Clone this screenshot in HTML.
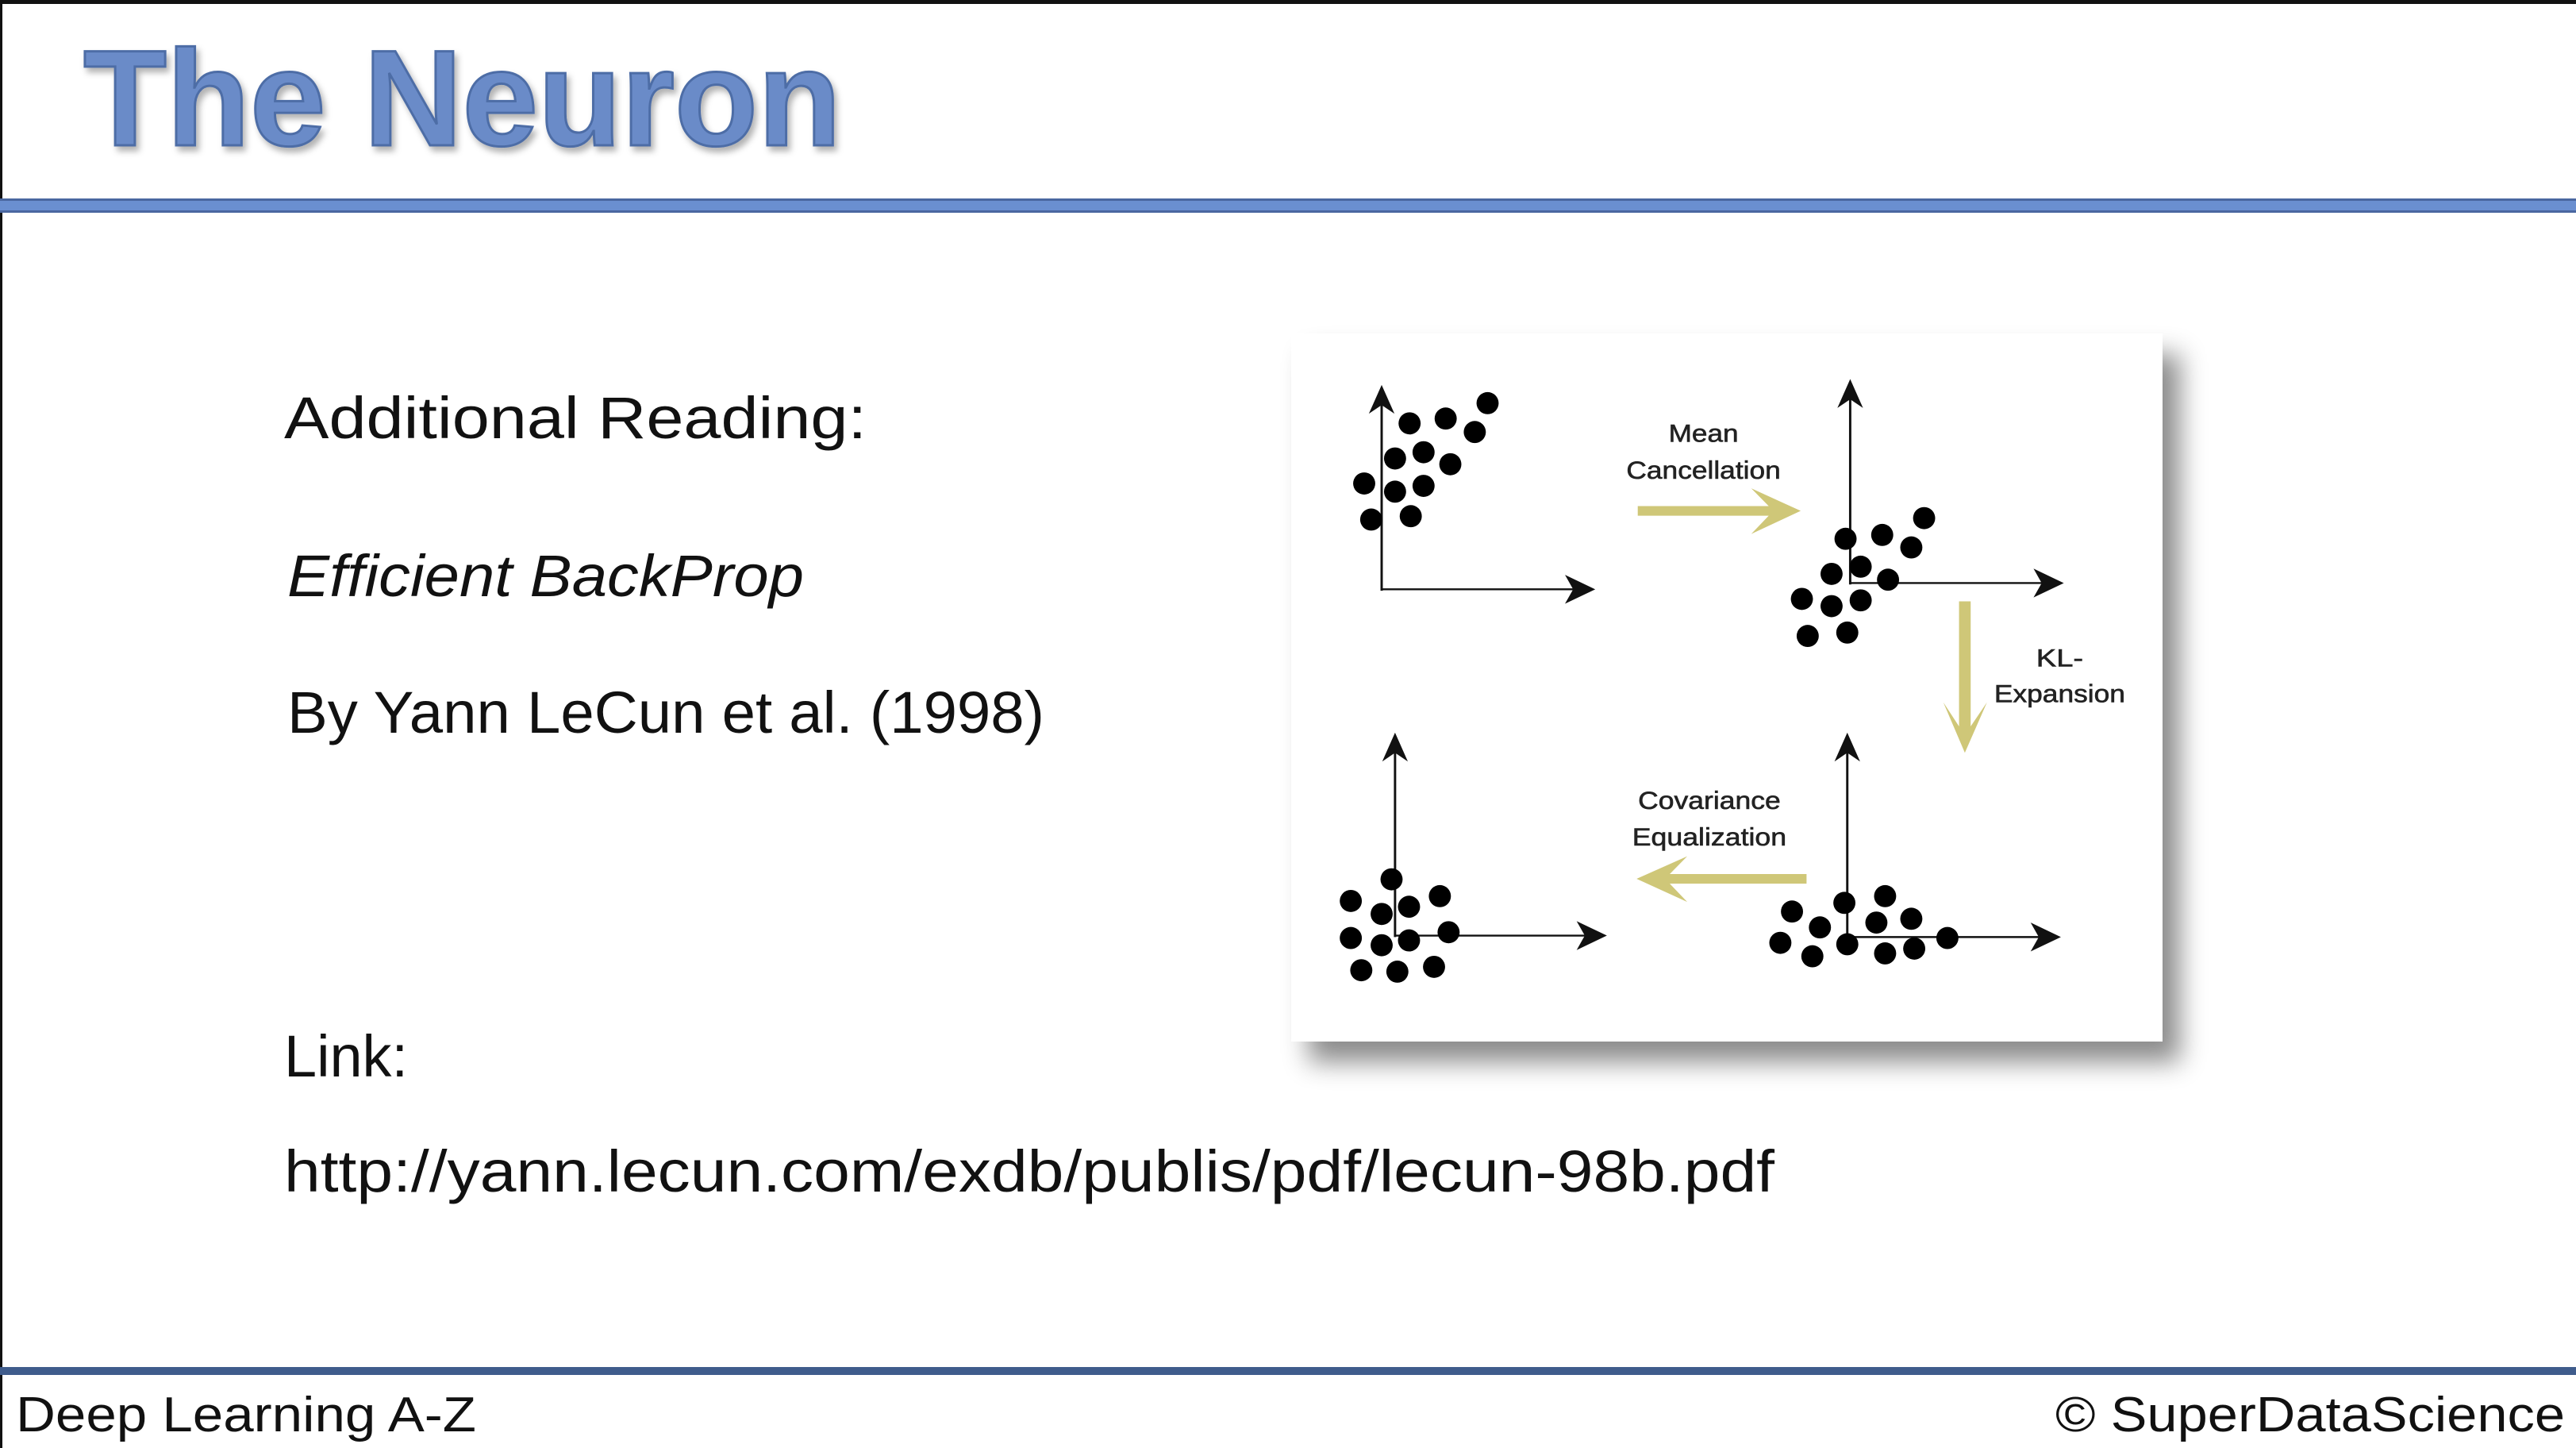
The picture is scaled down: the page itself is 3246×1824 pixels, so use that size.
<!DOCTYPE html>
<html><head><meta charset="utf-8"><style>
html,body{margin:0;padding:0;background:#fff}
body{width:3246px;height:1824px;position:relative;overflow:hidden;font-family:"Liberation Sans",sans-serif}
</style></head><body>
<svg width="3246" height="1824" style="position:absolute;left:0;top:0" xmlns="http://www.w3.org/2000/svg">
<defs>
<filter id="ts" x="-5%" y="-5%" width="110%" height="120%"><feDropShadow dx="4" dy="6" stdDeviation="4" flood-color="#000" flood-opacity="0.3"/></filter>
<filter id="bs" x="-10%" y="-10%" width="125%" height="125%"><feDropShadow dx="22" dy="26" stdDeviation="16" flood-color="#000" flood-opacity="0.45"/></filter>
</defs>
<rect x="0" y="0" width="3246" height="5" fill="#111"/>
<rect x="0" y="0" width="3" height="1824" fill="#111"/>
<text x="105" y="183" font-size="172" font-weight="bold" fill="#6a8bc8" stroke="#4e6da6" stroke-width="3" filter="url(#ts)" textLength="955" lengthAdjust="spacingAndGlyphs">The Neuron</text>
<rect x="0" y="250" width="3246" height="18" fill="#6a8fd0"/>
<rect x="0" y="250" width="3246" height="3" fill="#4a67a0"/>
<rect x="0" y="265" width="3246" height="3" fill="#4a67a0"/>
<g font-size="74" fill="#111">
<text x="358" y="552" textLength="734" lengthAdjust="spacingAndGlyphs">Additional Reading:</text>
<text x="362" y="751" font-style="italic" textLength="651" lengthAdjust="spacingAndGlyphs">Efficient BackProp</text>
<text x="362" y="923" textLength="954" lengthAdjust="spacingAndGlyphs">By Yann LeCun et al. (1998)</text>
<text x="358" y="1356" textLength="156" lengthAdjust="spacingAndGlyphs">Link:</text>
<text x="358" y="1501" textLength="1878" lengthAdjust="spacingAndGlyphs">http://yann.lecun.com/exdb/publis/pdf/lecun-98b.pdf</text>
</g>
<rect x="1627" y="420" width="1098" height="892" fill="#fff" filter="url(#bs)"/>
<rect x="0" y="1722" width="3246" height="10" fill="#3f5c8c"/>
<text x="20" y="1803" font-size="62" fill="#111" textLength="580" lengthAdjust="spacingAndGlyphs">Deep Learning A-Z</text>
<text x="2590" y="1803" font-size="62" fill="#111" textLength="642" lengthAdjust="spacingAndGlyphs">© SuperDataScience</text>
</svg>
<svg width="1150" height="950" viewBox="0 0 1568 1568" preserveAspectRatio="none" style="position:absolute;left:1620px;top:400px" xmlns="http://www.w3.org/2000/svg">
<g stroke="#111" stroke-width="4" fill="none">
<path d="M165 568V150M165 565H500"/>
<path d="M970 555V140M970 552H1305"/>
<path d="M965 1290V875M965 1288H1300"/>
<path d="M188 1288V875M188 1285H520"/>
</g>
<g fill="#111">
<path d="M165 140l-22 60 22-18 22 18z"/><path d="M532 565l-52-30 14 30-14 30z"/>
<path d="M970 128l-22 60 22-18 22 18z"/><path d="M1337 552l-52-30 14 30-14 30z"/>
<path d="M965 863l-22 60 22-18 22 18z"/><path d="M1332 1288l-52-30 14 30-14 30z"/>
<path d="M188 863l-22 60 22-18 22 18z"/><path d="M552 1285l-52-30 14 30-14 30z"/>
</g>
<g fill="#000">
<ellipse cx="347" cy="178" rx="19" ry="23"/><ellipse cx="213" cy="220" rx="19" ry="23"/><ellipse cx="275" cy="210" rx="19" ry="23"/><ellipse cx="325" cy="238" rx="19" ry="23"/><ellipse cx="237" cy="280" rx="19" ry="23"/><ellipse cx="188" cy="293" rx="19" ry="23"/><ellipse cx="283" cy="305" rx="19" ry="23"/><ellipse cx="135" cy="345" rx="19" ry="23"/><ellipse cx="188" cy="362" rx="19" ry="23"/><ellipse cx="237" cy="350" rx="19" ry="23"/><ellipse cx="147" cy="420" rx="19" ry="23"/><ellipse cx="215" cy="413" rx="19" ry="23"/>
<ellipse cx="1097" cy="417" rx="19" ry="23"/><ellipse cx="962" cy="460" rx="19" ry="23"/><ellipse cx="1025" cy="452" rx="19" ry="23"/><ellipse cx="1075" cy="478" rx="19" ry="23"/><ellipse cx="988" cy="518" rx="19" ry="23"/><ellipse cx="938" cy="533" rx="19" ry="23"/><ellipse cx="1035" cy="545" rx="19" ry="23"/><ellipse cx="887" cy="585" rx="19" ry="23"/><ellipse cx="938" cy="600" rx="19" ry="23"/><ellipse cx="988" cy="588" rx="19" ry="23"/><ellipse cx="897" cy="662" rx="19" ry="23"/><ellipse cx="965" cy="655" rx="19" ry="23"/>
<ellipse cx="1030" cy="1203" rx="19" ry="23"/><ellipse cx="960" cy="1217" rx="19" ry="23"/><ellipse cx="870" cy="1235" rx="19" ry="23"/><ellipse cx="1075" cy="1250" rx="19" ry="23"/><ellipse cx="918" cy="1268" rx="19" ry="23"/><ellipse cx="1015" cy="1258" rx="19" ry="23"/><ellipse cx="850" cy="1300" rx="19" ry="23"/><ellipse cx="965" cy="1303" rx="19" ry="23"/><ellipse cx="1137" cy="1290" rx="19" ry="23"/><ellipse cx="1080" cy="1312" rx="19" ry="23"/><ellipse cx="905" cy="1328" rx="19" ry="23"/><ellipse cx="1030" cy="1322" rx="19" ry="23"/>
<ellipse cx="182" cy="1168" rx="19" ry="23"/><ellipse cx="112" cy="1213" rx="19" ry="23"/><ellipse cx="165" cy="1240" rx="19" ry="23"/><ellipse cx="212" cy="1225" rx="19" ry="23"/><ellipse cx="265" cy="1203" rx="19" ry="23"/><ellipse cx="112" cy="1290" rx="19" ry="23"/><ellipse cx="165" cy="1305" rx="19" ry="23"/><ellipse cx="212" cy="1295" rx="19" ry="23"/><ellipse cx="280" cy="1278" rx="19" ry="23"/><ellipse cx="130" cy="1357" rx="19" ry="23"/><ellipse cx="192" cy="1360" rx="19" ry="23"/><ellipse cx="255" cy="1350" rx="19" ry="23"/>
</g>
<g fill="#cfc778">
<path d="M605 392H830L800 355 885 402 800 450 830 412H605z"/>
<path d="M1157 590V850L1130 800 1167 905 1205 800 1177 850V590z"/>
<path d="M895 1157H660L690 1120 603 1167 690 1215 660 1177H895z"/>
</g>
<g font-size="52" fill="#222" stroke="#222" stroke-width="1" text-anchor="middle">
<text x="718" y="258" textLength="120" lengthAdjust="spacingAndGlyphs">Mean</text><text x="718" y="335" textLength="265" lengthAdjust="spacingAndGlyphs">Cancellation</text>
<text x="1330" y="725">KL-</text><text x="1330" y="800" textLength="225" lengthAdjust="spacingAndGlyphs">Expansion</text>
<text x="728" y="1022" textLength="245" lengthAdjust="spacingAndGlyphs">Covariance</text><text x="728" y="1098" textLength="265" lengthAdjust="spacingAndGlyphs">Equalization</text>
</g>
</svg>
</body></html>
